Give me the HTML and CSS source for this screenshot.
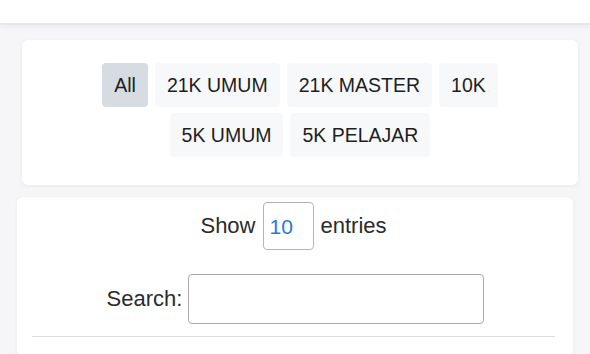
FILE: index.html
```html
<!DOCTYPE html>
<html lang="id">
<head>
  <meta charset="UTF-8">
  <meta name="viewport" content="width=device-width, initial-scale=1.0">
  <title>Hasil Lomba</title>
  <link rel="stylesheet" href="styles.css">
</head>
<body>

  <div class="topbar"></div>

  <div class="card filter-card">
    <div class="filter-list">
      <button class="filter-btn active">All</button>
      <button class="filter-btn">21K UMUM</button>
      <button class="filter-btn">21K MASTER</button>
      <button class="filter-btn">10K</button>
      <button class="filter-btn">5K UMUM</button>
      <button class="filter-btn">5K PELAJAR</button>
    </div>
  </div>

  <div class="card table-card">
    <div class="table-length">
      <label for="entries">Show</label>
      <select id="entries">
        <option>10</option>
        <option>25</option>
        <option>50</option>
      </select>
      <span>entries</span>
    </div>
    <div class="table-search">
      <label for="search">Search:</label>
      <input type="search" id="search">
    </div>
    <div class="table-rule"></div>
  </div>

</body>
</html>
```

FILE: styles.css
```css
body {
  font-family: 'Liberation Sans', Arial, sans-serif;
  background-color: #f6f6f9;
  margin: 0;
  padding: 0;
  color: #2b2b2b;
}

.topbar {
  height: 23px;
  background-color: #fff;
  border-bottom: 2px solid #e6e6e8;
  box-shadow: 0 2px 6px rgba(0, 0, 0, 0.04);
}

.card {
  background-color: #fff;
  border-radius: 6px;
  box-shadow: 0 1px 4px rgba(0, 0, 0, 0.06);
  width: 556px;
  box-sizing: border-box;
}

.filter-card {
  margin: 15px 0 0 22px;
  padding: 23px 20px 28px;
}

.filter-list {
  display: flex;
  flex-wrap: wrap;
  justify-content: center;
  gap: 6px 7px;
}

.filter-btn {
  font-family: inherit;
  font-size: 19.5px;
  line-height: 24px;
  color: #1e1e1e;
  background-color: #f7f8fa;
  border: none;
  border-radius: 4px;
  padding: 10px 12px;
  cursor: pointer;
}

.filter-btn.active {
  background-color: #d6dce2;
}

.table-card {
  margin: 12px 0 0 17px;
  padding: 5px 18px 20px 15px;
  font-size: 22px;
}

.table-length,
.table-search {
  display: flex;
  align-items: center;
  justify-content: center;
}

.table-length {
  gap: 7px;
}

.table-length select {
  appearance: none;
  -webkit-appearance: none;
  font-family: inherit;
  font-size: 21px;
  color: #1f7ae0;
  background: #fff;
  border: 1px solid #b5b5b5;
  border-radius: 4px;
  width: 51px;
  height: 48px;
  padding: 0 6px;
}

.table-search {
  margin-top: 24px;
  gap: 6px;
  padding-left: 4px;
}

.table-search input {
  width: 296px;
  height: 50px;
  box-sizing: border-box;
  border: 1px solid #aaa;
  border-radius: 4px;
  background: #fff;
}

.table-rule {
  margin-top: 12px;
  border-top: 1px solid #ddd;
}
```
